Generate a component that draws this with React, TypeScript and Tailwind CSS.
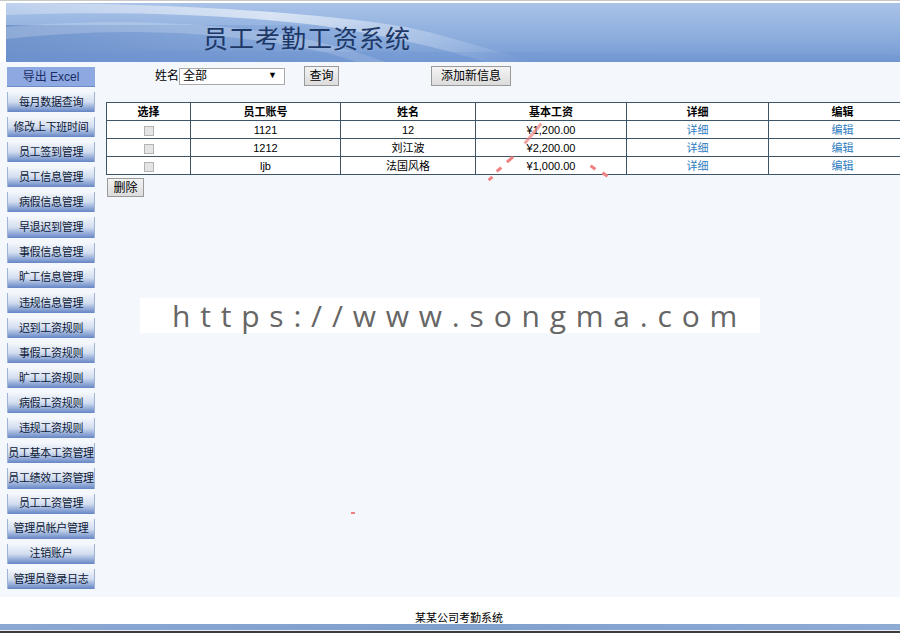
import React from "react";

const menu = [
  "每月数据查询",
  "修改上下班时间",
  "员工签到管理",
  "员工信息管理",
  "病假信息管理",
  "早退迟到管理",
  "事假信息管理",
  "旷工信息管理",
  "违规信息管理",
  "迟到工资规则",
  "事假工资规则",
  "旷工工资规则",
  "病假工资规则",
  "违规工资规则",
  "员工基本工资管理",
  "员工绩效工资管理",
  "员工工资管理",
  "管理员帐户管理",
  "注销账户",
  "管理员登录日志",
];

const rows = [
  { id: "1121", name: "12", pay: "¥1,200.00" },
  { id: "1212", name: "刘江波", pay: "¥2,200.00" },
  { id: "ljb", name: "法国风格", pay: "¥1,000.00" },
];

function HeaderArt() {
  return (
    <svg className="absolute inset-0" width="894" height="59" viewBox="0 0 894 59" preserveAspectRatio="none">
      <defs>
        <linearGradient id="hg" x1="0" y1="0" x2="0" y2="1">
          <stop offset="0" stopColor="#a9c2e8" />
          <stop offset="0.55" stopColor="#8eafde" />
          <stop offset="1" stopColor="#7499d3" />
        </linearGradient>
        <linearGradient id="lg" x1="0" y1="0" x2="1" y2="0">
          <stop offset="0" stopColor="#6a8ec8" stopOpacity="0.8" />
          <stop offset="0.3" stopColor="#7396cf" stopOpacity="0.3" />
          <stop offset="0.55" stopColor="#8fb0de" stopOpacity="0" />
        </linearGradient>
        <linearGradient id="wg" x1="0" y1="0" x2="1" y2="0">
          <stop offset="0" stopColor="#ffffff" stopOpacity="0.25" />
          <stop offset="0.5" stopColor="#ffffff" stopOpacity="0.6" />
          <stop offset="1" stopColor="#ffffff" stopOpacity="0" />
        </linearGradient>
      </defs>
      <rect width="894" height="59" fill="url(#hg)" />
      <path d="M0 22 L894 22 L894 59 L0 59 Z" fill="url(#lg)" />
      <path d="M0 0 C150 0 300 8 400 24 C440 32 480 46 530 59 L480 59 C430 44 380 32 310 22 C210 10 100 8 0 12 Z" fill="url(#wg)" />
      <path d="M0 24 C90 16 200 18 280 32 C330 42 360 52 380 59 L350 59 C320 48 270 38 200 32 C120 26 60 30 0 36 Z" fill="#ffffff" opacity="0.2" />
      <path d="M0 50 C200 46 500 50 894 52 L894 59 L0 59 Z" fill="#6c92cf" opacity="0.3" />
    </svg>
  );
}

export default function App() {
  const cjk = { fontFamily: '"Liberation Sans", "Noto Sans CJK SC", sans-serif' };
  return (
    <div className="w-[900px] h-[633px] overflow-hidden bg-white relative text-[12px] text-black" style={cjk}>
      <div className="h-[1px] bg-[#c8c8c8]" />
      <div className="h-[2px]" />
      {/* header */}
      <div className="ml-[6px] h-[59px] relative overflow-hidden">
        <HeaderArt />
        <div
          className="absolute left-[197px] top-[18px] text-[25px] leading-[32px] text-[#1d3766] tracking-[1px]"
          style={{ fontFamily: '"Noto Sans CJK SC", serif' }}
        >
          员工考勤工资系统
        </div>
      </div>
      {/* main */}
      <div className="h-[535px] bg-[#f4f7fc] flex relative">
        <div className="w-[106px] shrink-0 pl-[7px] pt-[5px] flex flex-col gap-[5px]">
          <div className="w-[88px] h-[20px] bg-[#8ea8e2] flex items-center justify-center text-[12px] text-[#1b2f66] border-b border-[#6f8cc8]">
            导出 Excel
          </div>
          {menu.map((m) => (
            <div
              key={m}
              className="w-[88px] h-[20.1px] bg-gradient-to-b from-[#f4f7fc] via-[#d2ddef] to-[#6585c4] flex items-center justify-center text-[11px] text-[#0c1836] whitespace-nowrap tracking-[-0.3px] border-x border-[#9fb3d9]"
            >
              {m}
            </div>
          ))}
        </div>
        <div className="flex-1 pt-[4px]">
          <div className="flex items-center h-[20px]">
            <span className="ml-[49px] text-[12px]">姓名</span>
            <div className="w-[106px] h-[17px] bg-white border border-[#a9a9a9] flex items-center justify-between px-[3px] text-[12px]">
              <span>全部</span>
              <span className="text-[9px] mr-[4px]">▼</span>
            </div>
            <button className="ml-[19px] w-[35px] h-[20px] bg-gradient-to-b from-[#f4f4f4] to-[#dcdcdc] border border-[#9a9a9a] text-[12px] flex items-center justify-center">
              查询
            </button>
            <button className="ml-[92px] w-[80px] h-[20px] bg-gradient-to-b from-[#f4f4f4] to-[#dcdcdc] border border-[#9a9a9a] text-[12px] flex items-center justify-center">
              添加新信息
            </button>
          </div>
          <table className="mt-[16px] border-collapse bg-white text-[11px] w-[810px] table-fixed">
            <colgroup>
              <col className="w-[84px]" />
              <col className="w-[150px]" />
              <col className="w-[135px]" />
              <col className="w-[151px]" />
              <col className="w-[142px]" />
              <col className="w-[148px]" />
            </colgroup>
            <thead>
              <tr className="h-[18px]">
                {["选择", "员工账号", "姓名", "基本工资", "详细", "编辑"].map((h) => (
                  <th key={h} className="border border-[#3d5566] font-bold text-center p-0 leading-[16px]">
                    {h}
                  </th>
                ))}
              </tr>
            </thead>
            <tbody>
              {rows.map((r) => (
                <tr key={r.id} className="h-[18px]">
                  <td className="border border-[#3d5566] text-center p-0 leading-[16px]">
                    <span className="inline-block w-[10px] h-[10px] bg-[#e4e4e4] border border-[#b4b4b4] align-middle" />
                  </td>
                  <td className="border border-[#3d5566] text-center p-0 leading-[16px]">{r.id}</td>
                  <td className="border border-[#3d5566] text-center p-0 leading-[16px]">{r.name}</td>
                  <td className="border border-[#3d5566] text-center p-0 leading-[16px]">{r.pay}</td>
                  <td className="border border-[#3d5566] text-center p-0 leading-[16px] text-[#2e7cc0]">详细</td>
                  <td className="border border-[#3d5566] text-center p-0 leading-[16px] text-[#2e7cc0]">编辑</td>
                </tr>
              ))}
            </tbody>
          </table>
          <button className="mt-[3px] ml-[1px] w-[37px] h-[19px] bg-gradient-to-b from-[#f4f4f4] to-[#dcdcdc] border border-[#9a9a9a] text-[12px] flex items-center justify-center">
            删除
          </button>
        </div>
        {/* watermark marks */}
        <div className="absolute left-[488px] top-[115px] w-[5px] h-[3px] bg-[#f08080] rotate-[-40deg]" />
        <div className="absolute left-[496px] top-[106px] w-[6px] h-[3px] bg-[#f08080] rotate-[-40deg]" />
        <div className="absolute left-[506px] top-[96px] w-[8px] h-[3px] bg-[#f08080] rotate-[-40deg]" />
        <div className="absolute left-[520px] top-[70px] w-[26px] h-[3px] bg-[#f08080] opacity-70 rotate-[-50deg]" />
        <div className="absolute left-[590px] top-[104px] w-[6px] h-[3px] bg-[#f08080] rotate-[35deg]" />
        <div className="absolute left-[602px] top-[111px] w-[6px] h-[3px] bg-[#f08080] rotate-[35deg]" />
        <div className="absolute left-[351px] top-[450px] w-[4px] h-[2px] bg-[#f08080]" />
        <div className="absolute left-[140px] top-[236px] w-[620px] h-[35px] bg-white flex items-center pl-[32px]">
          <span
            className="text-[30px] text-[#666666] tracking-[9.8px] leading-none"
            style={{ fontFamily: '"Open Sans", "Liberation Sans", sans-serif' }}
          >
            https://www.songma.com
          </span>
        </div>
      </div>
      {/* footer */}
      <div className="h-[27px] bg-white flex items-end justify-center">
        <span className="text-[11px] leading-[13px] mb-[-1px] ml-[18px]">某某公司考勤系统</span>
      </div>
      <div className="h-[6px] bg-gradient-to-r from-[#8ba8d2] via-[#7f9fcd] to-[#8eabd4]" />
      <div className="h-[1px] bg-[#e6edf6]" />
      <div className="h-[2px] bg-[#3c3c3c]" />
    </div>
  );
}
